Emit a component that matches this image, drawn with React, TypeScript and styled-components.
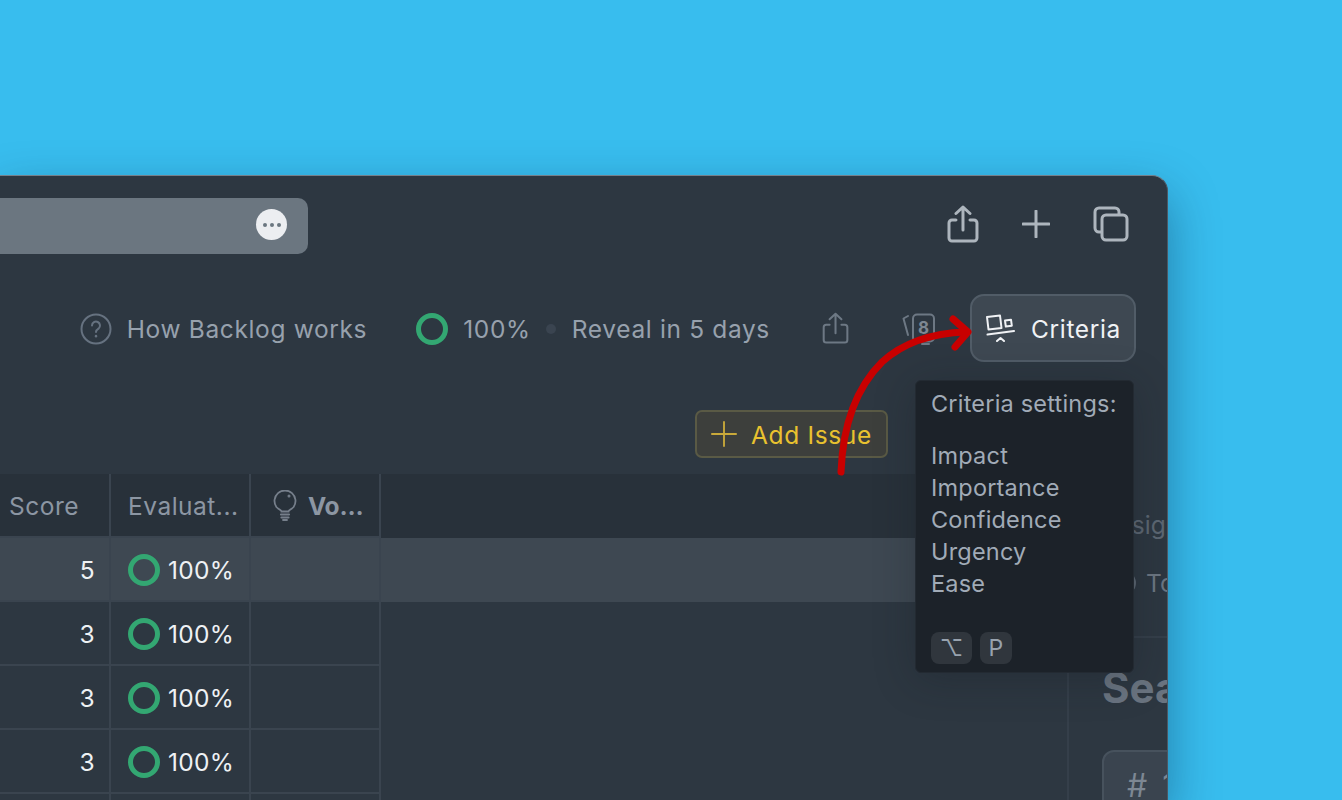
import React from "react";
import styled, { createGlobalStyle } from "styled-components";

const GlobalStyle = createGlobalStyle`
  html, body {
    margin: 0;
    padding: 0;
    background: #38bdee;
    font-family: Inter, "Liberation Sans", sans-serif;
    overflow: hidden;
  }
`;

const Page = styled.div`
  height: 800px;
  padding-top: 175px;
  box-sizing: border-box;
  overflow: hidden;
`;

const Window = styled.div`
  position: relative;
  width: 1168px;
  height: 625px;
  box-sizing: border-box;
  background: #2d3741;
  border-top: 1px solid #74808b;
  border-right: 1px solid #4c5863;
  border-top-right-radius: 16px;
  box-shadow: 0 20px 50px rgba(0, 30, 60, 0.4);
  overflow: hidden;
`;

const TopBar = styled.div`
  display: flex;
  justify-content: space-between;
  align-items: flex-start;
  height: 118px;
  padding: 22px 38px 0 0;
  box-sizing: border-box;
`;

const AddressBar = styled.div`
  display: flex;
  justify-content: flex-end;
  align-items: center;
  width: 308px;
  height: 56px;
  padding: 0 21px 3px 0;
  box-sizing: border-box;
  background: #6b7680;
  border-radius: 0 10px 10px 0;
`;

const DotsButton = styled.div`
  display: flex;
  justify-content: center;
  align-items: center;
  gap: 3px;
  width: 31px;
  height: 31px;
  border-radius: 50%;
  background: #eceef1;
`;

const Dot = styled.span`
  width: 4px;
  height: 4px;
  border-radius: 50%;
  background: #6b7680;
`;

const TopIcons = styled.div`
  display: flex;
  align-items: center;
  gap: 43px;
  height: 52px;
`;

const HeaderRow = styled.div`
  display: flex;
  justify-content: flex-end;
  align-items: center;
  height: 68px;
  padding-right: 31px;
  font-size: 24.5px;
  letter-spacing: 0.65px;
  color: #97a1ad;
`;

const HeaderItem = styled.div<{ $gap: number; $after: number; $drop?: number }>`
  display: flex;
  align-items: center;
  gap: ${(p) => p.$gap}px;
  margin-right: ${(p) => p.$after}px;
  padding-top: ${(p) => p.$drop ?? 2}px;
  white-space: nowrap;
`;

const Ring = styled.span`
  display: block;
  width: 32px;
  height: 32px;
  box-sizing: border-box;
  border: 5px solid #33a772;
  border-radius: 50%;
  flex-shrink: 0;
`;

const Separator = styled.span`
  width: 10px;
  height: 10px;
  border-radius: 50%;
  background: #3a4450;
`;

const ButtonLabel = styled.span`
  padding-top: 2px;
`;

const CriteriaButton = styled.div`
  display: flex;
  align-items: center;
  gap: 16px;
  width: 166px;
  height: 68px;
  padding-left: 13px;
  box-sizing: border-box;
  background: #3e4852;
  border: 2px solid #515c67;
  border-radius: 14px;
  color: #f0f2f5;
`;

const ActionRow = styled.div`
  display: flex;
  justify-content: flex-end;
  align-items: flex-start;
  height: 112px;
  padding: 48px 279px 0 0;
  box-sizing: border-box;
`;

const AddIssue = styled.div`
  display: flex;
  align-items: center;
  gap: 14px;
  width: 193px;
  height: 48px;
  padding-left: 14px;
  box-sizing: border-box;
  background: #3d3f3c;
  border: 2px solid #5a5a45;
  border-radius: 7px;
  color: #e9c22f;
  font-size: 24.5px;
  letter-spacing: 0.65px;
  white-space: nowrap;
`;

const Content = styled.div`
  display: flex;
  height: 326px;
`;

const Board = styled.div`
  width: 1067px;
  flex-shrink: 0;
  border-right: 2px solid #353f4a;
`;

const Row = styled.div<{ $tone?: "head" | "active" }>`
  display: flex;
  height: 64px;
  background: ${(p) =>
    p.$tone === "head" ? "#28313a" : p.$tone === "active" ? "#3e4852" : "transparent"};
  font-size: 24.5px;
  letter-spacing: ${(p) => (p.$tone === "head" ? "0.5px" : "0.3px")};
  color: ${(p) => (p.$tone === "head" ? "#8c96a3" : "#eef1f4")};
`;

const Cell = styled.div<{ $width: number; $align?: string }>`
  display: flex;
  align-items: center;
  justify-content: ${(p) => p.$align ?? "flex-start"};
  gap: 8px;
  width: ${(p) => p.$width}px;
  box-sizing: border-box;
  padding-top: 2px;
  border-right: 2px solid #3a444f;
  border-bottom: 2px solid #3a444f;
  white-space: nowrap;
`;

const ScoreCell = styled(Cell)`
  padding-left: 9px;
  padding-right: 14px;
`;

const EvalCell = styled(Cell)`
  padding-left: 17px;
`;

const VoteCell = styled(Cell)`
  padding-left: 22px;
  gap: 11px;
`;

const VoteLabel = styled.b`
  font-weight: 700;
  letter-spacing: -0.2px;
`;

const Side = styled.div`
  flex: 1;
  min-width: 0;
  padding-left: 33px;
  overflow: hidden;
  white-space: nowrap;
`;

const SideLabel = styled.div`
  display: flex;
  align-items: center;
  height: 102px;
  font-size: 24.5px;
  color: #5d6773;
`;

const SideStatus = styled.div`
  display: flex;
  align-items: center;
  gap: 10px;
  height: 58px;
  margin: -22px 0 0 -33px;
  padding-left: 43px;
  padding-bottom: 24px;
  font-size: 24.5px;
  color: #6c7682;
  border-bottom: 2px solid #353f4a;
`;

const StatusDot = styled.span`
  flex-shrink: 0;
  width: 24px;
  height: 24px;
  box-sizing: border-box;
  border: 2px solid #5d6773;
  border-radius: 50%;
`;

const SideTitle = styled.div`
  margin-top: 25px;
  font-size: 42px;
  font-weight: 700;
  line-height: 50px;
  color: #6a7480;
`;

const SearchBox = styled.div`
  display: flex;
  align-items: center;
  width: 200px;
  height: 70px;
  margin-top: 37px;
  padding-left: 23px;
  box-sizing: border-box;
  background: #3a444f;
  border: 2px solid #47525d;
  border-radius: 12px;
  font-size: 32px;
  letter-spacing: 3px;
  color: #7d8793;
`;

const Popover = styled.div`
  position: absolute;
  top: 204px;
  right: 33px;
  width: 219px;
  height: 293px;
  padding: 7px 15px 0;
  box-sizing: border-box;
  background: #1c2229;
  border: 1px solid #232a32;
  border-radius: 6px;
  box-shadow: 0 6px 40px rgba(20, 26, 33, 0.3);
  font-size: 23.5px;
  letter-spacing: 0.2px;
  line-height: 32px;
  color: #a1abb7;
  white-space: nowrap;
`;

const PopoverList = styled.div`
  margin-top: 20px;
`;

const Keys = styled.div`
  display: flex;
  gap: 8px;
  margin-top: 32px;
`;

const Key = styled.span<{ $width: number }>`
  display: flex;
  align-items: center;
  justify-content: center;
  width: ${(p) => p.$width}px;
  height: 32px;
  border-radius: 8px;
  background: #30363d;
  font-size: 23px;
  color: #98a2ae;
`;

const ArrowOverlay = styled.svg`
  position: absolute;
  top: 134px;
  left: 830px;
  pointer-events: none;
`;

const ShareIcon = ({ size, color, width }: { size: number; color: string; width: number }) => (
  <svg width={size * 0.82} height={size} viewBox="0 0 32 39" fill="none" stroke={color} strokeWidth={width} strokeLinecap="round" strokeLinejoin="round">
    <path d="M9 15H5a3 3 0 0 0-3 3v15a3 3 0 0 0 3 3h22a3 3 0 0 0 3-3V18a3 3 0 0 0-3-3h-4" />
    <path d="M16 25V2M9 8.500l7-6.500 7 6.500" />
  </svg>
);

const PlusIcon = ({ size, color, width }: { size: number; color: string; width: number }) => (
  <svg width={size} height={size} viewBox="0 0 28 28" fill="none" stroke={color} strokeWidth={width} strokeLinecap="round">
    <path d="M14 1v26M1 14h26" />
  </svg>
);

const CopyIcon = () => (
  <svg width="36" height="36" viewBox="0 0 36 36" fill="none" stroke="#adb5bd" strokeWidth="3" strokeLinejoin="round">
    <path d="M8 26H6a4 4 0 0 1-4-4V6a4 4 0 0 1 4-4h16a4 4 0 0 1 4 4v3" />
    <rect x="9" y="9" width="25" height="25" rx="4" />
  </svg>
);

const HelpIcon = () => (
  <svg width="32" height="32" viewBox="0 0 32 32" fill="none" stroke="#667280" strokeWidth="2" strokeLinecap="round">
    <circle cx="16" cy="16" r="14.500" />
    <path d="M12 12.500a4 4 0 1 1 6.500 3.200c-1.500 1-2.500 1.800-2.500 3.300" />
    <path d="M16 23v.2" strokeWidth="2.500" />
  </svg>
);

const CardsIcon = () => (
  <svg width="34" height="32" viewBox="0 0 34 32" fill="none" stroke="#6d7884" strokeWidth="2" strokeLinecap="round" strokeLinejoin="round">
    <path d="M6 3 1.500 5.500 6 22" />
    <rect x="11" y="1.500" width="21" height="27" rx="4" />
    <path d="M20 31h7" />
    <text x="21.500" y="21" textAnchor="middle" fontSize="17" fontWeight="700" fill="#7d8793" stroke="none" letterSpacing="0">
      8
    </text>
  </svg>
);

const CriteriaIcon = () => (
  <svg width="30" height="28" viewBox="0 0 30 28" fill="none" stroke="#f0f2f5" strokeWidth="2" strokeLinecap="round" strokeLinejoin="round">
    <path d="M2 3 15 1.500l1.500 12.500-13 1.500z" />
    <path d="M20 6.500l6-.8.800 6-6 .8z" />
    <path d="M2.500 20.500 29 17" />
    <path d="M12 27l3.500-3 3.500 3" />
  </svg>
);

const BulbIcon = () => (
  <svg width="24" height="32" viewBox="0 0 24 32" fill="none" stroke="#767f8b" strokeWidth="1.800" strokeLinecap="round">
    <path d="M8.500 21.500C8.500 20 5 19 3.400 17A10.500 10.500 0 1 1 20.600 17C19 19 15.500 20 15.500 21.500z" />
    <path d="M8 24.500h8M8.500 27.500h7" strokeWidth="2.200" />
    <path d="M10 30h4" strokeWidth="1.800" />
    <circle cx="16" cy="6" r=".6" />
  </svg>
);

const rows = [5, 3, 3, 3];

export default function App() {
  return (
    <Page>
      <GlobalStyle />
      <Window>
        <TopBar>
          <AddressBar>
            <DotsButton>
              <Dot />
              <Dot />
              <Dot />
            </DotsButton>
          </AddressBar>
          <TopIcons>
            <ShareIcon size={39} color="#adb5bd" width={3} />
            <PlusIcon size={28} color="#adb5bd" width={3} />
            <CopyIcon />
          </TopIcons>
        </TopBar>

        <HeaderRow>
          <HeaderItem $gap={15} $after={49}>
            <HelpIcon />
            How Backlog works
          </HeaderItem>
          <HeaderItem $gap={15} $after={15}>
            <Ring />
            100%
          </HeaderItem>
          <HeaderItem $gap={16} $after={52}>
            <Separator />
            Reveal in 5 days
          </HeaderItem>
          <HeaderItem $gap={0} $after={53} $drop={0}>
            <ShareIcon size={33} color="#6d7884" width={2.4} />
          </HeaderItem>
          <HeaderItem $gap={0} $after={34} $drop={1}>
            <CardsIcon />
          </HeaderItem>
          <CriteriaButton>
            <CriteriaIcon />
            <ButtonLabel>Criteria</ButtonLabel>
          </CriteriaButton>
        </HeaderRow>

        <ActionRow>
          <AddIssue>
            <PlusIcon size={26} color="#c9a93a" width={2} />
            <ButtonLabel>Add Issue</ButtonLabel>
          </AddIssue>
        </ActionRow>

        <Content>
          <Board>
            <Row $tone="head">
              <ScoreCell $width={111}>Score</ScoreCell>
              <EvalCell $width={140}>Evaluat...</EvalCell>
              <VoteCell $width={130}>
                <BulbIcon />
                <VoteLabel>Vo...</VoteLabel>
              </VoteCell>
            </Row>
            {rows.map((score, i) => (
              <Row key={i} $tone={i === 0 ? "active" : undefined}>
                <ScoreCell $width={111} $align="flex-end">
                  {score}
                </ScoreCell>
                <EvalCell $width={140}>
                  <Ring />
                  100%
                </EvalCell>
                <VoteCell $width={130} />
              </Row>
            ))}
            <Row>
              <ScoreCell $width={111} />
              <EvalCell $width={140} />
              <VoteCell $width={130} />
            </Row>
          </Board>
          <Side>
            <SideLabel>Assigned</SideLabel>
            <SideStatus>
              <StatusDot />
              To Do
            </SideStatus>
            <SideTitle>Search</SideTitle>
            <SearchBox># 1</SearchBox>
          </Side>
        </Content>

        <Popover>
          Criteria settings:
          <PopoverList>
            <div>Impact</div>
            <div>Importance</div>
            <div>Confidence</div>
            <div>Urgency</div>
            <div>Ease</div>
          </PopoverList>
          <Keys>
            <Key $width={41}>⌥</Key>
            <Key $width={32}>P</Key>
          </Keys>
        </Popover>

        <ArrowOverlay width="150" height="170" viewBox="830 309 150 170" fill="none" stroke="#c80000" strokeWidth="7" strokeLinecap="round" strokeLinejoin="round">
          <path d="M841 471C843 420 858 385 882 361 905 340 935 332 966 331" />
          <path d="M953 318 968 331 955 346" />
        </ArrowOverlay>
      </Window>
    </Page>
  );
}
